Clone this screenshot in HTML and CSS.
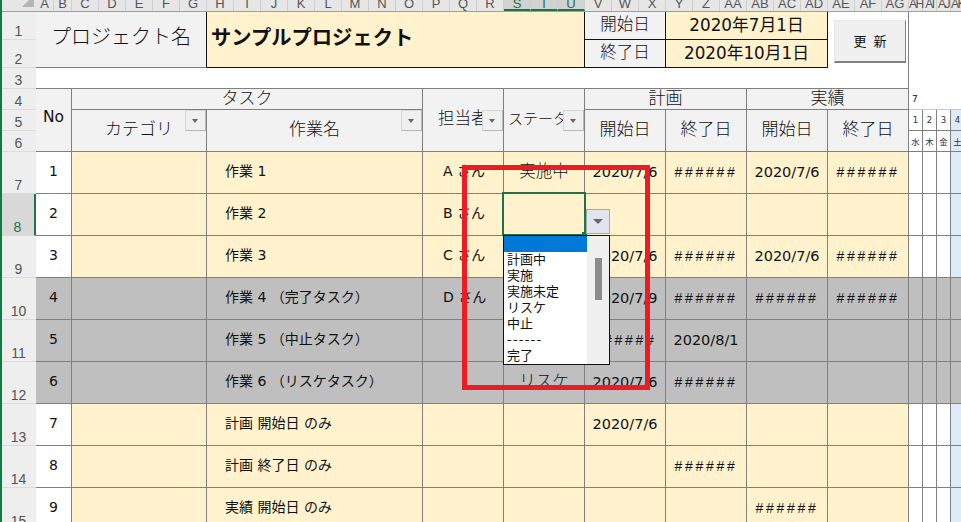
FILE: index.html
```html
<!DOCTYPE html>
<html lang="ja">
<head>
<meta charset="utf-8">
<title>プロジェクト</title>
<link rel="stylesheet" href="styles.css">
</head>
<body>
<div class="app">
  <div class="edge"></div>
  <div class="sheet">
    <div class="corner"><span class="tri"></span></div>
    <div class="cols">
      <span class="w18">A</span><span class="w18">B</span><span>C</span><span>D</span><span>E</span><span>F</span><span>G</span><span>H</span><span>I</span><span>J</span><span>K</span><span>L</span><span>M</span><span>N</span><span>O</span><span>P</span><span>Q</span><span>R</span><span class="sel">S</span><span class="sel">T</span><span class="sel">U</span><span>V</span><span>W</span><span>X</span><span>Y</span><span>Z</span><span>AA</span><span>AB</span><span>AC</span><span>AD</span><span>AE</span><span>AF</span><span>AG</span><span class="w14">AH</span><span class="w14">AI</span><span class="w14">AJ</span><span class="w14">AK</span>
    </div>

    <div class="rh r1">1</div>
    <div class="rh r2">2</div>
    <div class="rh r3">3</div>
    <div class="rh r4">4</div>
    <div class="rh r5">5</div>
    <div class="rh r6">6</div>

    <div class="c hd title pname">プロジェクト名</div>
    <div class="c cream title2">サンプルプロジェクト</div>
    <div class="c hd dark h1 lab1">開始日</div>
    <div class="c cream dark h1 val1">2020年7月1日</div>
    <div class="c hd dark h1 lab2">終了日</div>
    <div class="c cream dark h1 val2">2020年10月1日</div>
    <div class="btnwrap"><div class="btn">更 新</div></div>
    <div class="blank"></div>
    <div class="month"><span>7</span></div>

    <div class="c hd h2 no">No</div>
    <div class="c hd h2 task">タスク</div>
    <div class="c hd h2 cat">カテゴリ<span class="fb"></span></div>
    <div class="c hd h2 name">作業名<span class="fb"></span></div>
    <div class="c hd h2 per">担当者<span class="fb fbm"></span></div>
    <div class="c hd h3 sta">ステータ<span class="fb fbm"></span></div>
    <div class="c hd h2 plan">計画</div>
    <div class="c hd h2 act">実績</div>
    <div class="c hd h2 d1">開始日</div>
    <div class="c hd h2 d2">終了日</div>
    <div class="c hd h2 d3">開始日</div>
    <div class="c hd h2 d4">終了日</div>
    <div class="days"><span>1</span><span>2</span><span>3</span><span class="sat">4</span></div>
    <div class="dows"><span>水</span><span>木</span><span>金</span><span class="sat">土</span></div>

    <div class="rh">7</div>
    <div class="c n">1</div><div class="c cream"></div><div class="c cream t">作業 1</div><div class="c cream p">A さん</div><div class="c cream s">実施中</div><div class="c cream v">2020/7/6</div><div class="c cream x">######</div><div class="c cream v">2020/7/6</div><div class="c cream x">######</div>
    <div class="g"><i></i><i></i><i></i><i class="sat"></i></div>

    <div class="rh cur">8</div>
    <div class="c n">2</div><div class="c cream"></div><div class="c cream t">作業 2</div><div class="c cream p">B さん</div><div class="c cream s"></div><div class="c cream v"></div><div class="c cream v"></div><div class="c cream v"></div><div class="c cream v"></div>
    <div class="g"><i></i><i></i><i></i><i class="sat"></i></div>

    <div class="rh">9</div>
    <div class="c n">3</div><div class="c cream"></div><div class="c cream t">作業 3</div><div class="c cream p">C さん</div><div class="c cream s"></div><div class="c cream v">2020/7/6</div><div class="c cream x">######</div><div class="c cream v">2020/7/6</div><div class="c cream x">######</div>
    <div class="g"><i></i><i></i><i></i><i class="sat"></i></div>

    <div class="rh">10</div>
    <div class="c n gray">4</div><div class="c gray"></div><div class="c gray t">作業 4 （完了タスク）</div><div class="c gray p">D さん</div><div class="c gray s"></div><div class="c gray v">2020/7/9</div><div class="c gray x">######</div><div class="c gray x">######</div><div class="c gray x">######</div>
    <div class="g gg"><i></i><i></i><i></i><i></i></div>

    <div class="rh">11</div>
    <div class="c n gray">5</div><div class="c gray"></div><div class="c gray t">作業 5 （中止タスク）</div><div class="c gray p"></div><div class="c gray s"></div><div class="c gray x">######</div><div class="c gray v">2020/8/1</div><div class="c gray v"></div><div class="c gray v"></div>
    <div class="g gg"><i></i><i></i><i></i><i></i></div>

    <div class="rh">12</div>
    <div class="c n gray">6</div><div class="c gray"></div><div class="c gray t">作業 6 （リスケタスク）</div><div class="c gray p"></div><div class="c gray s">リスケ</div><div class="c gray v">2020/7/6</div><div class="c gray x">######</div><div class="c gray v"></div><div class="c gray v"></div>
    <div class="g gg"><i></i><i></i><i></i><i></i></div>

    <div class="rh">13</div>
    <div class="c n">7</div><div class="c cream"></div><div class="c cream t">計画 開始日 のみ</div><div class="c cream p"></div><div class="c cream s"></div><div class="c cream v">2020/7/6</div><div class="c cream v"></div><div class="c cream v"></div><div class="c cream v"></div>
    <div class="g"><i></i><i></i><i></i><i class="sat"></i></div>

    <div class="rh">14</div>
    <div class="c n">8</div><div class="c cream"></div><div class="c cream t">計画 終了日 のみ</div><div class="c cream p"></div><div class="c cream s"></div><div class="c cream v"></div><div class="c cream x">######</div><div class="c cream v"></div><div class="c cream v"></div>
    <div class="g"><i></i><i></i><i></i><i class="sat"></i></div>

    <div class="rh">15</div>
    <div class="c n">9</div><div class="c cream"></div><div class="c cream t">実績 開始日 のみ</div><div class="c cream p"></div><div class="c cream s"></div><div class="c cream v"></div><div class="c cream v"></div><div class="c cream x">######</div><div class="c cream v"></div>
    <div class="g"><i></i><i></i><i></i><i class="sat"></i></div>
  </div>

  <div class="cursor"><span class="handle"></span></div>
  <div class="ddbtn"></div>
  <div class="list">
    <div class="items">
      <div class="item active"></div>
      <div class="item">計画中</div>
      <div class="item">実施</div>
      <div class="item">実施未定</div>
      <div class="item">リスケ</div>
      <div class="item">中止</div>
      <div class="item dash">------</div>
      <div class="item">完了</div>
    </div>
    <div class="track"><div class="thumb"></div></div>
  </div>
  <div class="redbox"></div>
</div>
</body>
</html>
```

FILE: styles.css
```css
* { box-sizing: border-box; }
html, body { margin: 0; padding: 0; width: 961px; height: 522px; overflow: hidden; background: #fff; }
body { font-family: "DejaVu Sans", "Noto Sans CJK JP", sans-serif; color: #111; font-weight: 400; }
.app { position: relative; display: flex; width: 961px; height: 522px; overflow: hidden; }
.edge { width: 2px; flex: none; background: #107c41; }

.sheet {
  display: grid;
  flex: none;
  width: 959px;
  grid-template-columns: 34px 36px 135px 216px 81px 81px 81px 81px 81px 81px 52px;
  grid-template-rows: 12px 28px 28px 21px 21px 21px 21px 42px 42px 42px 42px 42px 42px 42px 42px 42px;
}

.corner { background: #e6e6e6; position: relative; overflow: hidden; border-bottom: 1px solid #a0a0a0; }
.tri { position: absolute; right: 2px; bottom: 4px; width: 0; height: 0; border-style: solid; border-width: 0 0 12px 12px; border-color: transparent transparent #b5b5b5 transparent; }
.cols { grid-column: 2 / -1; display: flex; background: #e6e6e6; overflow: hidden; border-bottom: 1px solid #a0a0a0; }
.cols span { flex: none; width: 27px; height: 11px; line-height: 8px; text-align: center; font-family: "Liberation Sans", sans-serif; font-size: 13px; color: #555; border-right: 1px solid #cfcfcf; }
.cols .w18 { width: 18px; }
.cols .w14 { width: 14px; font-size: 12px; letter-spacing: -1.5px; }
.cols .sel { background: #d2d2d2; color: #217346; border-bottom: 2px solid #217346; }

.rh { grid-column: 1; background: #eeeeee; font-family: "Liberation Sans", sans-serif; font-size: 14px; line-height: 16px; color: #555; display: flex; align-items: flex-end; justify-content: center; border-bottom: 1px solid #dcdcdc; padding-right: 1px; }
.r1 { grid-row: 2; } .r2 { grid-row: 3; } .r3 { grid-row: 4; } .r4 { grid-row: 5; } .r5 { grid-row: 6; } .r6 { grid-row: 7; }
.rh.cur { background: #d8d8d8; color: #217346; border-right: 2px solid #217346; }

.c { display: flex; align-items: center; justify-content: center; border-right: 1px solid #808080; border-bottom: 1px solid #808080; white-space: nowrap; overflow: hidden; font-size: 14px; min-width: 0; background: #fff; padding-bottom: 2px; }
.hd { background: #f2f2f2; }
.cream { background: #fff2cc; }
.gray { background: #bfbfbf; }
.dark { border-color: #111; }

.title { font-size: 20px; }
.pname { grid-column: 2 / 4; grid-row: 2 / 4; border-right-color: #111; padding-bottom: 8px; font-weight: 300; }
.title2 { grid-column: 4 / 7; grid-row: 2 / 4; justify-content: flex-start; padding: 0 0 8px 4px; font-size: 20.3px; font-weight: 700; border-color: #111; }
.h1 { font-size: 16.8px; padding-bottom: 0; }
.lab1, .val1, .lab2, .val2 { line-height: 1; }
.lab1, .lab2 { font-size: 16.5px; font-weight: 300; }
.lab1 { grid-column: 7; grid-row: 2; }
.val1 { grid-column: 8 / 10; grid-row: 2; }
.lab2 { grid-column: 7; grid-row: 3; }
.val2 { grid-column: 8 / 10; grid-row: 3; }
.btnwrap { grid-column: 10; grid-row: 2 / 4; display: flex; align-items: center; justify-content: center; border-right: 1px solid #808080; }
.btn { width: 72px; height: 43px; margin: 2px 0 0 4px; display: flex; align-items: center; justify-content: center; background: #f0f0f0; font-size: 13px; word-spacing: 3px; border: 1px solid #e8e8e8; border-right: 1px solid #808080; border-bottom: 2px solid #808080; }
.blank { grid-column: 2 / 11; grid-row: 4; border-right: 1px solid #808080; border-bottom: 1px solid #808080; }
.month { grid-column: 11; grid-row: 5; display: flex; align-items: center; font-size: 9px; padding: 0 0 0 3px; border-bottom: 1px solid #c8c8c8; }

.h2 { font-size: 17px; font-weight: 300; }
.h3 { font-size: 15px; font-weight: 300; }
.no { grid-column: 2; grid-row: 5 / 8; font-size: 15.5px; font-weight: 400; padding-bottom: 6px; }
.task { grid-column: 3 / 5; grid-row: 5; padding-bottom: 6px; }
.cat { grid-column: 3; grid-row: 6 / 8; position: relative; padding: 0 0 6px 0; }
.name { grid-column: 4; grid-row: 6 / 8; position: relative; padding-bottom: 6px; }
.per { grid-column: 5; grid-row: 5 / 8; position: relative; justify-content: flex-start; padding: 0 0 6px 15px; font-size: 16.5px; }
.sta { grid-column: 6; grid-row: 5 / 8; position: relative; justify-content: flex-start; padding: 0 0 6px 4px; }
.plan { grid-column: 7 / 9; grid-row: 5; padding-bottom: 6px; }
.act { grid-column: 9 / 11; grid-row: 5; padding-bottom: 6px; }
.d1 { grid-column: 7; grid-row: 6 / 8; padding-bottom: 6px; }
.d2 { grid-column: 8; grid-row: 6 / 8; padding-bottom: 6px; }
.d3 { grid-column: 9; grid-row: 6 / 8; padding-bottom: 6px; }
.d4 { grid-column: 10; grid-row: 6 / 8; padding-bottom: 6px; }

.fb { position: absolute; right: 0; top: 0; width: 21px; height: 21px; background: #f0f0f0; border: 1px solid #b8b8b8; border-top-color: #d8d8d8; border-left-color: #d8d8d8; }
.fb::after { content: ""; position: absolute; left: 6px; top: 8px; border-style: solid; border-width: 4px 3.5px 0 3.5px; border-color: #666 transparent transparent transparent; }
.fbm { top: 21px; }

.days { grid-column: 11; grid-row: 6; display: flex; }
.dows { grid-column: 11; grid-row: 7; display: flex; }
.days span, .dows span { flex: none; width: 14px; font-size: 8.5px; display: flex; align-items: center; justify-content: center; border-right: 1px solid #808080; border-bottom: 1px solid #808080; color: #333; }
span.sat, i.sat { background: #ddebf7; }
.g { grid-column: 11; display: flex; }
.g i { flex: none; width: 14px; border-right: 1px solid #808080; border-bottom: 1px solid #808080; }
.gg { background: #bfbfbf; }

.n { font-size: 14px; padding-bottom: 4px; }
.t { justify-content: flex-start; padding: 0 0 5px 18px; font-size: 14px; }
.p { justify-content: flex-start; padding: 0 0 5px 20px; font-size: 14px; }
.s { font-size: 16.5px; padding-bottom: 5px; font-weight: 300; }
.v { font-size: 14.5px; }
.x { font-family: "Liberation Sans", sans-serif; font-size: 14px; letter-spacing: 2.7px; }

.cursor { position: absolute; left: 502px; top: 192px; width: 84px; height: 44px; border: 2px solid #217346; }
.handle { position: absolute; right: -3px; bottom: -3px; width: 5px; height: 5px; background: #217346; }
.ddbtn { position: absolute; left: 586px; top: 209px; width: 24px; height: 25px; background: #e1e4ee; border: 1px solid #a8a8a8; }
.ddbtn::after { content: ""; position: absolute; left: 6px; top: 9px; border-style: solid; border-width: 5px 5px 0 5px; border-color: #666 transparent transparent transparent; }
.list { position: absolute; left: 503px; top: 235px; width: 107px; height: 130px; border: 1px solid #111; background: #fff; display: flex; }
.items { width: 83px; flex: none; }
.item { height: 16px; line-height: 16px; font-size: 13px; padding-left: 3px; white-space: nowrap; color: #111; }
.item.active { background: #0078d7; }
.item.dash { letter-spacing: 1.2px; }
.track { flex: 1; background: #f0f0f0; position: relative; }
.thumb { position: absolute; left: 8px; top: 22px; width: 7px; height: 42px; background: #8c8c8c; }
.redbox { position: absolute; left: 462px; top: 165px; width: 188px; height: 225px; border: 5px solid #ed1c24; }
```
